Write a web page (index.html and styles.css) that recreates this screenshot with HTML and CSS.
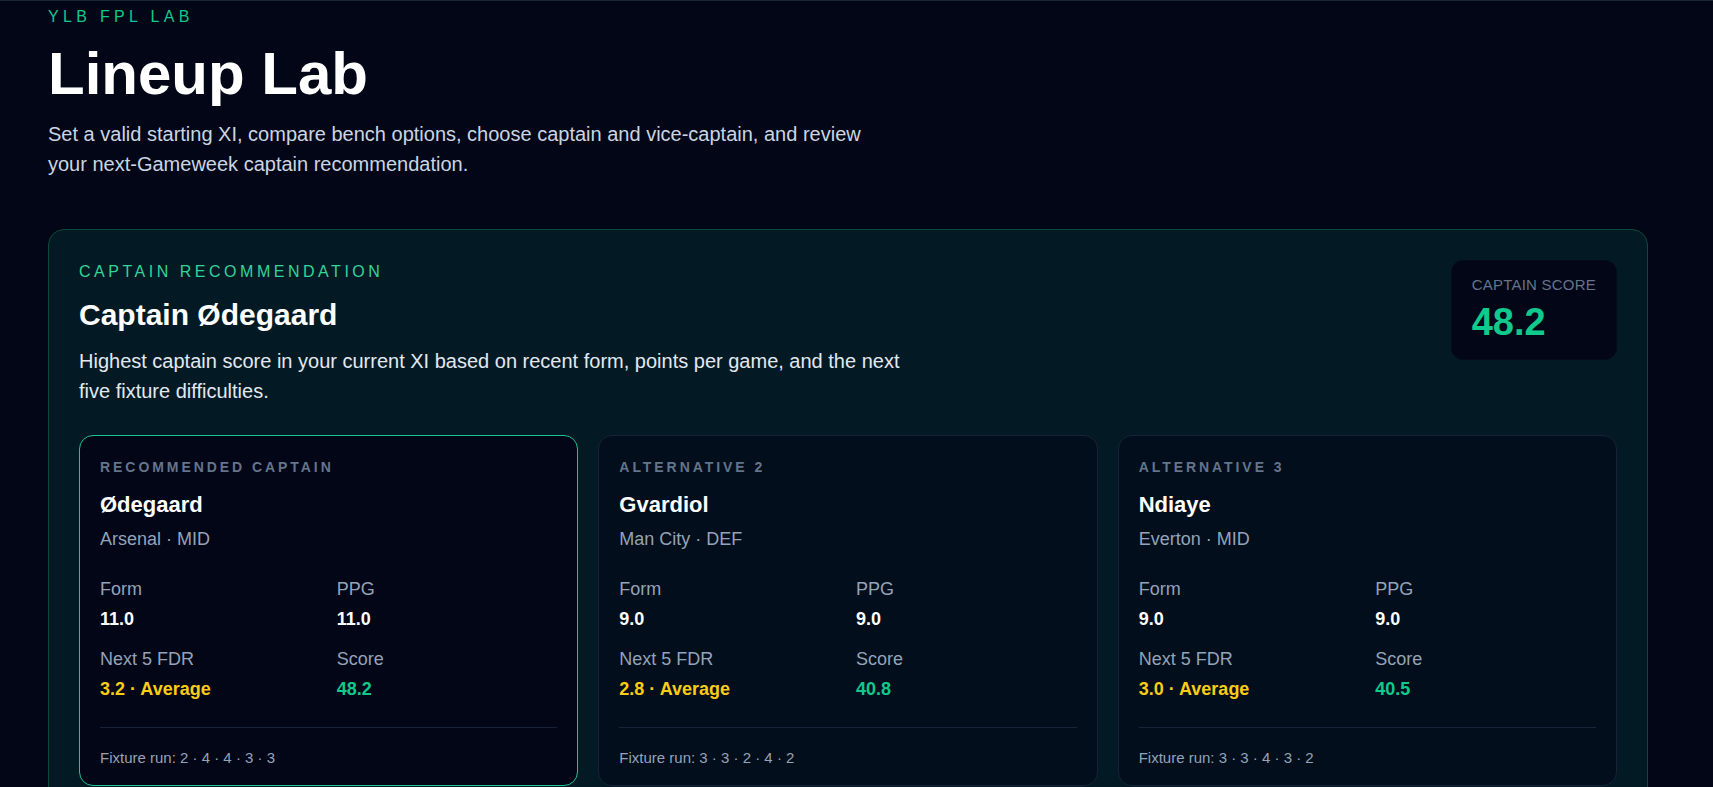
FILE: index.html
```html
<!DOCTYPE html>
<html lang="en">
<head>
<meta charset="utf-8">
<title>Lineup Lab · YLB FPL LAB</title>
<link rel="stylesheet" href="styles.css">
</head>
<body>
<div class="app">
  <main class="page">
    <header class="hero">
      <p class="eyebrow">YLB FPL LAB</p>
      <h1 class="title">Lineup Lab</h1>
      <p class="lead">Set a valid starting XI, compare bench options, choose captain and vice-captain, and review your next-Gameweek captain recommendation.</p>
    </header>

    <section class="panel">
      <div class="panel-head">
        <div class="panel-intro">
          <p class="panel-kicker">Captain Recommendation</p>
          <h2 class="panel-title">Captain Ødegaard</h2>
          <p class="panel-text">Highest captain score in your current XI based on recent form, points per game, and the next five fixture difficulties.</p>
        </div>
        <div class="score-box">
          <div class="score-label">Captain Score</div>
          <div class="score-value">48.2</div>
        </div>
      </div>

      <div class="cards">
        <article class="card card--primary">
          <div class="card-label">Recommended Captain</div>
          <h3 class="card-name">Ødegaard</h3>
          <div class="card-team">Arsenal · MID</div>
          <div class="stats">
            <div class="stat"><div class="stat-label">Form</div><div class="stat-value">11.0</div></div>
            <div class="stat"><div class="stat-label">PPG</div><div class="stat-value">11.0</div></div>
            <div class="stat"><div class="stat-label">Next 5 FDR</div><div class="stat-value stat-value--fdr">3.2 · Average</div></div>
            <div class="stat"><div class="stat-label">Score</div><div class="stat-value stat-value--score">48.2</div></div>
          </div>
          <div class="card-foot">Fixture run: 2 · 4 · 4 · 3 · 3</div>
        </article>

        <article class="card">
          <div class="card-label">Alternative 2</div>
          <h3 class="card-name">Gvardiol</h3>
          <div class="card-team">Man City · DEF</div>
          <div class="stats">
            <div class="stat"><div class="stat-label">Form</div><div class="stat-value">9.0</div></div>
            <div class="stat"><div class="stat-label">PPG</div><div class="stat-value">9.0</div></div>
            <div class="stat"><div class="stat-label">Next 5 FDR</div><div class="stat-value stat-value--fdr">2.8 · Average</div></div>
            <div class="stat"><div class="stat-label">Score</div><div class="stat-value stat-value--score">40.8</div></div>
          </div>
          <div class="card-foot">Fixture run: 3 · 3 · 2 · 4 · 2</div>
        </article>

        <article class="card">
          <div class="card-label">Alternative 3</div>
          <h3 class="card-name">Ndiaye</h3>
          <div class="card-team">Everton · MID</div>
          <div class="stats">
            <div class="stat"><div class="stat-label">Form</div><div class="stat-value">9.0</div></div>
            <div class="stat"><div class="stat-label">PPG</div><div class="stat-value">9.0</div></div>
            <div class="stat"><div class="stat-label">Next 5 FDR</div><div class="stat-value stat-value--fdr">3.0 · Average</div></div>
            <div class="stat"><div class="stat-label">Score</div><div class="stat-value stat-value--score">40.5</div></div>
          </div>
          <div class="card-foot">Fixture run: 3 · 3 · 4 · 3 · 2</div>
        </article>
      </div>
    </section>
  </main>
</div>
</body>
</html>
```

FILE: styles.css
```css
* { box-sizing: border-box; }

html, body {
  margin: 0;
  padding: 0;
  background: #020617;
}

body {
  font-family: "Liberation Sans", Arial, Helvetica, sans-serif;
  color: #f8fafc;
  line-height: 1.5;
  overflow: hidden;
}

.app {
  min-height: 100vh;
  border-top: 1px solid #1a2536;
}

.page {
  width: 1600px;
  margin-left: 48px;
  padding-top: 4px;
}

/* Hero */
.eyebrow {
  margin: 0;
  font-size: 16px;
  line-height: 24px;
  letter-spacing: 0.27em;
  color: #10c98d;
  text-transform: uppercase;
}

.title {
  margin: 12px 0 0;
  font-size: 60px;
  line-height: 66px;
  font-weight: 700;
  color: #ffffff;
}

.lead {
  margin: 12px 0 0;
  max-width: 840px;
  font-size: 20px;
  line-height: 30px;
  color: #cbd5e1;
}

/* Panel */
.panel {
  margin-top: 50px;
  border: 1px solid #0a4a3d;
  border-radius: 16px;
  background: #031a25;
  padding: 30px;
}

.panel-head {
  display: flex;
  justify-content: space-between;
  align-items: flex-start;
  gap: 24px;
}

.panel-kicker {
  margin: 0;
  font-size: 16px;
  line-height: 24px;
  letter-spacing: 0.22em;
  text-transform: uppercase;
  color: #34d399;
}

.panel-title {
  margin: 13px 0 0;
  font-size: 30px;
  line-height: 36px;
  font-weight: 700;
  color: #ffffff;
}

.panel-text {
  margin: 13px 0 0;
  max-width: 840px;
  font-size: 20px;
  line-height: 30px;
  color: #e2e8f0;
}

.score-box {
  flex: none;
  background: #020617;
  border: 1px solid #040b1e;
  border-radius: 12px;
  padding: 14px 20px 15px;
}

.score-label {
  font-size: 15px;
  line-height: 20px;
  letter-spacing: 0.015em;
  text-transform: uppercase;
  color: #64748b;
}

.score-value {
  margin-top: 7px;
  font-size: 38px;
  line-height: 1.1;
  font-weight: 700;
  color: #10c98d;
}

/* Cards */
.cards {
  margin-top: 29px;
  display: grid;
  grid-template-columns: repeat(3, 1fr);
  gap: 20px;
}

.card {
  border: 1px solid #162236;
  border-radius: 14px;
  background: #020e1b;
  padding: 21px 20px 18px;
}

.card--primary {
  border-color: #1fc38f;
  background: #020617;
}

.card-label {
  font-size: 14px;
  line-height: 20px;
  font-weight: 700;
  letter-spacing: 0.21em;
  text-transform: uppercase;
  color: #64748b;
}

.card-name {
  margin: 13px 0 0;
  font-size: 22px;
  line-height: 30px;
  font-weight: 700;
  color: #ffffff;
}

.card-team {
  margin-top: 6px;
  font-size: 18px;
  line-height: 27px;
  color: #94a3b8;
}

.stats {
  margin-top: 23px;
  display: grid;
  grid-template-columns: 1fr 1fr;
  column-gap: 16px;
  row-gap: 13px;
}

.stat-label {
  font-size: 18px;
  line-height: 27px;
  color: #94a3b8;
}

.stat-value {
  margin-top: 3px;
  font-size: 18px;
  line-height: 27px;
  font-weight: 700;
  color: #ffffff;
}

.stat-value--fdr { color: #facc15; }
.stat-value--score { color: #10c98d; }

.card-foot {
  margin-top: 24px;
  border-top: 1px solid #18233a;
  padding-top: 21px;
  font-size: 15px;
  line-height: 18px;
  color: #94a3b8;
}
```
